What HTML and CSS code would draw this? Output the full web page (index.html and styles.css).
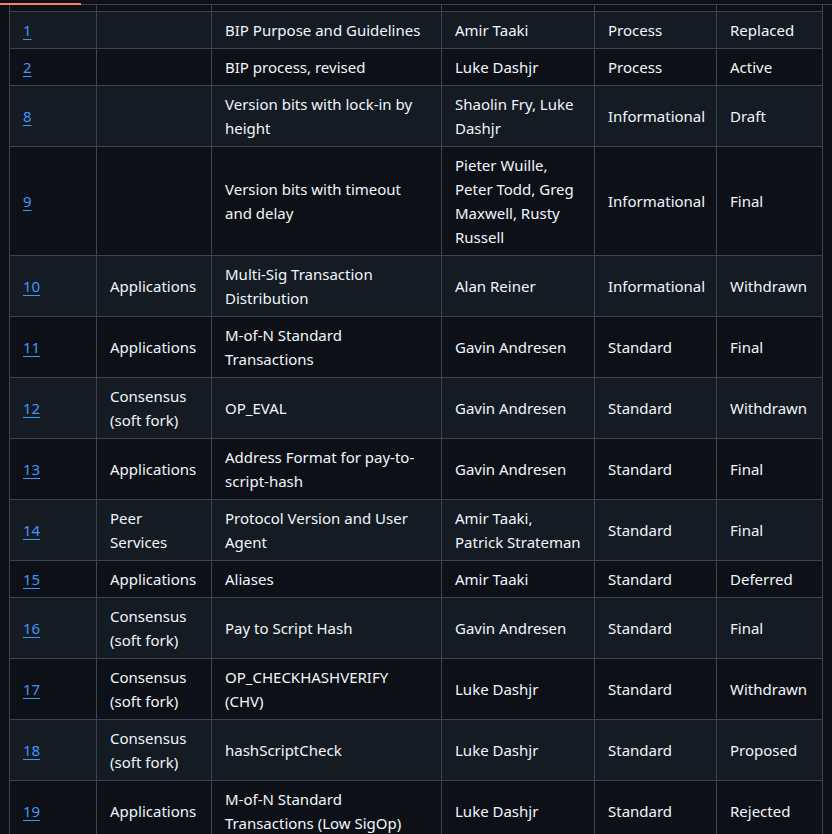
FILE: index.html
```html
<!DOCTYPE html>
<html lang="en">
<head>
  <meta charset="UTF-8">
  <meta name="viewport" content="width=device-width, initial-scale=1.0">
  <title>BIPs</title>
  <link rel="stylesheet" href="styles.css">
</head>
<body>
  <div class="tabs">
    <div class="tab active"></div>
  </div>

  <div class="readme">
    <table class="bip-table">
      <colgroup>
        <col class="c-num">
        <col class="c-layer">
        <col class="c-title">
        <col class="c-owner">
        <col class="c-type">
        <col class="c-status">
      </colgroup>
      <tbody>
        <!-- bottom edge of the row above, scrolled out of view -->
        <tr class="cut"><td></td><td></td><td></td><td></td><td></td><td></td></tr>
        <tr class="alt">
          <td><a href="#">1</a></td>
          <td></td>
          <td>BIP Purpose and Guidelines</td>
          <td>Amir Taaki</td>
          <td>Process</td>
          <td>Replaced</td>
        </tr>
        <tr>
          <td><a href="#">2</a></td>
          <td></td>
          <td>BIP process, revised</td>
          <td>Luke Dashjr</td>
          <td>Process</td>
          <td>Active</td>
        </tr>
        <tr class="alt">
          <td><a href="#">8</a></td>
          <td></td>
          <td>Version bits with lock-in by<br>height</td>
          <td>Shaolin Fry, Luke<br>Dashjr</td>
          <td>Informational</td>
          <td>Draft</td>
        </tr>
        <tr>
          <td><a href="#">9</a></td>
          <td></td>
          <td>Version bits with timeout<br>and delay</td>
          <td>Pieter Wuille,<br>Peter Todd, Greg<br>Maxwell, Rusty<br>Russell</td>
          <td>Informational</td>
          <td>Final</td>
        </tr>
        <tr class="alt">
          <td><a href="#">10</a></td>
          <td>Applications</td>
          <td>Multi-Sig Transaction<br>Distribution</td>
          <td>Alan Reiner</td>
          <td>Informational</td>
          <td>Withdrawn</td>
        </tr>
        <tr>
          <td><a href="#">11</a></td>
          <td>Applications</td>
          <td>M-of-N Standard<br>Transactions</td>
          <td>Gavin Andresen</td>
          <td>Standard</td>
          <td>Final</td>
        </tr>
        <tr class="alt">
          <td><a href="#">12</a></td>
          <td>Consensus<br>(soft fork)</td>
          <td>OP_EVAL</td>
          <td>Gavin Andresen</td>
          <td>Standard</td>
          <td>Withdrawn</td>
        </tr>
        <tr>
          <td><a href="#">13</a></td>
          <td>Applications</td>
          <td>Address Format for pay-to-<br>script-hash</td>
          <td>Gavin Andresen</td>
          <td>Standard</td>
          <td>Final</td>
        </tr>
        <tr class="alt">
          <td><a href="#">14</a></td>
          <td>Peer<br>Services</td>
          <td>Protocol Version and User<br>Agent</td>
          <td>Amir Taaki,<br>Patrick Strateman</td>
          <td>Standard</td>
          <td>Final</td>
        </tr>
        <tr>
          <td><a href="#">15</a></td>
          <td>Applications</td>
          <td>Aliases</td>
          <td>Amir Taaki</td>
          <td>Standard</td>
          <td>Deferred</td>
        </tr>
        <tr class="alt">
          <td><a href="#">16</a></td>
          <td>Consensus<br>(soft fork)</td>
          <td>Pay to Script Hash</td>
          <td>Gavin Andresen</td>
          <td>Standard</td>
          <td>Final</td>
        </tr>
        <tr>
          <td><a href="#">17</a></td>
          <td>Consensus<br>(soft fork)</td>
          <td>OP_CHECKHASHVERIFY<br>(CHV)</td>
          <td>Luke Dashjr</td>
          <td>Standard</td>
          <td>Withdrawn</td>
        </tr>
        <tr class="alt">
          <td><a href="#">18</a></td>
          <td>Consensus<br>(soft fork)</td>
          <td>hashScriptCheck</td>
          <td>Luke Dashjr</td>
          <td>Standard</td>
          <td>Proposed</td>
        </tr>
        <tr>
          <td><a href="#">19</a></td>
          <td>Applications</td>
          <td>M-of-N Standard<br>Transactions (Low SigOp)</td>
          <td>Luke Dashjr</td>
          <td>Standard</td>
          <td>Rejected</td>
        </tr>
      </tbody>
    </table>
  </div>
</body>
</html>
```

FILE: styles.css
```css
body {
  margin: 0;
  background-color: #0d1117;
  color: #f0f6fc;
  font-family: "Noto Sans", "Open Sans", sans-serif;
  font-size: 15px;
  line-height: 24px;
  overflow: hidden;
}
.tabs {
  display: flex;
  height: 4px;
  border-bottom: 1px solid #3d444d;
}
.tab.active {
  width: 81px;
  height: 3px;
  border-bottom: 2px solid #f78166;
  margin-bottom: -1px;
}
.readme {
  padding-left: 9px;
}
.bip-table {
  border-collapse: collapse;
  table-layout: fixed;
  width: 813px;
}
.c-num { width: 87px; }
.c-layer { width: 115px; }
.c-title { width: 230px; }
.c-owner { width: 153px; }
.c-type { width: 122px; }
.c-status { width: 106px; }
.bip-table td {
  border: 1px solid #3d444d;
  padding: 6px 13px;
  white-space: nowrap;
  overflow: hidden;
  vertical-align: middle;
}
.bip-table tr.cut td {
  height: 6px;
  padding: 0;
  border-top: 0;
}
.bip-table tr.alt {
  background-color: #151b23;
}
.bip-table a {
  color: #4493f8;
  text-decoration: underline;
  text-underline-offset: 3px;
}
```
